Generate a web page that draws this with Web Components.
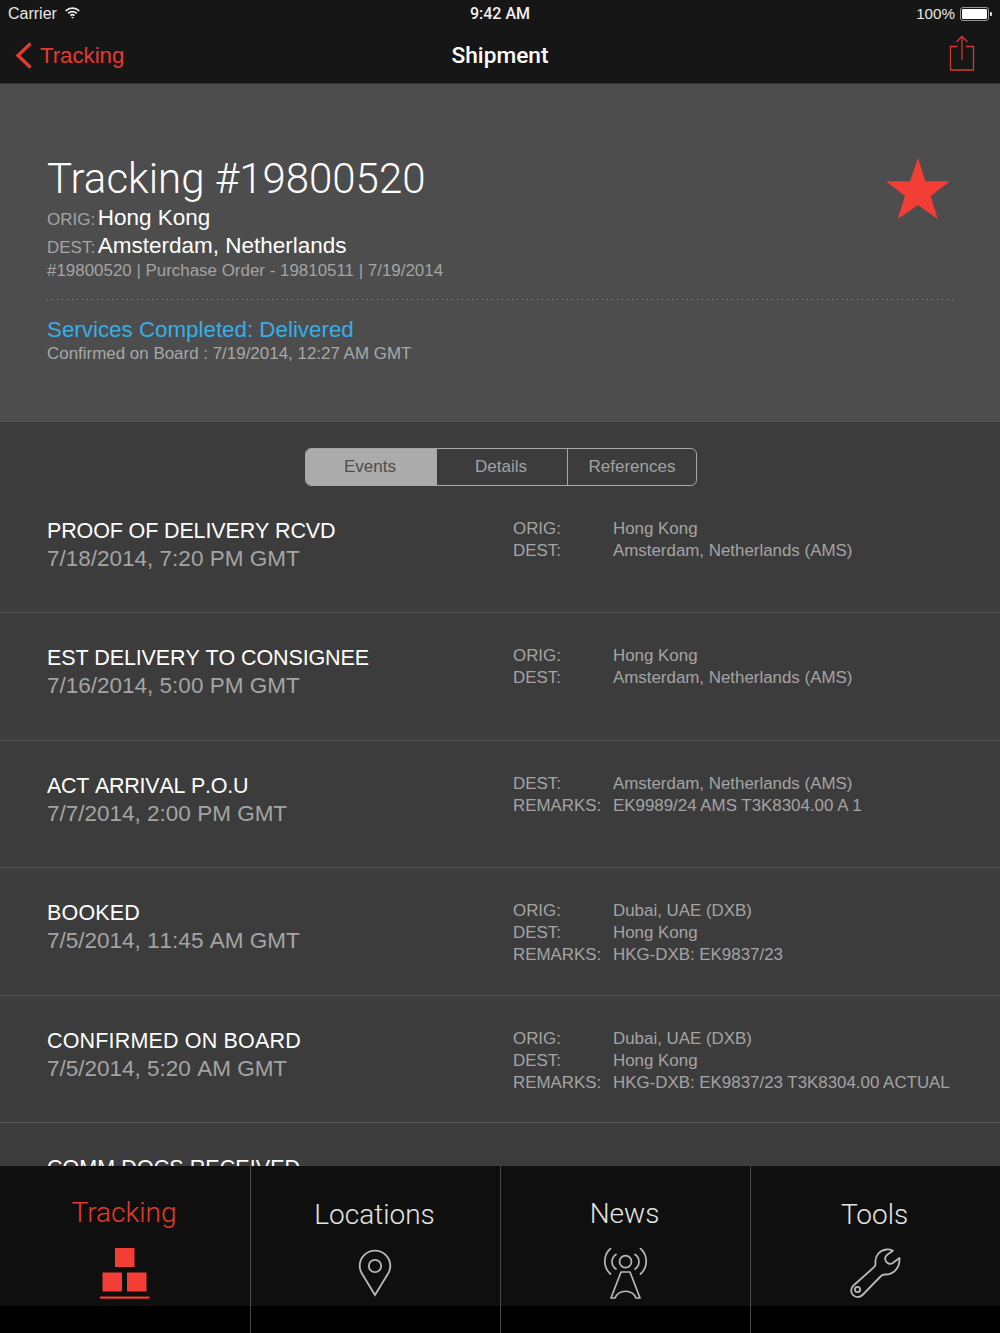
<!DOCTYPE html>
<html>
<head>
<meta charset="utf-8">
<title>Shipment</title>
<style>
  html, body { margin: 0; background: #000; }
  body { font-family: "Liberation Sans", Arial, sans-serif; }
</style>
</head>
<body>
<shipment-app>
  <status-bar></status-bar>
  <nav-bar back="Tracking" title="Shipment"></nav-bar>
  <shipment-header></shipment-header>
  <event-list>
    <seg-control></seg-control>
    <event-row title="PROOF OF DELIVERY RCVD" date="7/18/2014, 7:20 PM GMT" style="--track:-.14px">
      <info-line label="ORIG:">Hong Kong</info-line>
      <info-line label="DEST:">Amsterdam, Netherlands (AMS)</info-line>
    </event-row>
    <event-row title="EST DELIVERY TO CONSIGNEE" date="7/16/2014, 5:00 PM GMT" style="--track:-.12px">
      <info-line label="ORIG:">Hong Kong</info-line>
      <info-line label="DEST:">Amsterdam, Netherlands (AMS)</info-line>
    </event-row>
    <event-row title="ACT ARRIVAL P.O.U" date="7/7/2014, 2:00 PM GMT" style="--track:-.25px">
      <info-line label="DEST:">Amsterdam, Netherlands (AMS)</info-line>
      <info-line label="REMARKS:">EK9989/24 AMS T3K8304.00 A 1</info-line>
    </event-row>
    <event-row title="BOOKED" date="7/5/2014, 11:45 AM GMT" style="--track:.17px">
      <info-line label="ORIG:">Dubai, UAE (DXB)</info-line>
      <info-line label="DEST:">Hong Kong</info-line>
      <info-line label="REMARKS:">HKG-DXB: EK9837/23</info-line>
    </event-row>
    <event-row title="CONFIRMED ON BOARD" date="7/5/2014, 5:20 AM GMT" style="--track:.17px">
      <info-line label="ORIG:">Dubai, UAE (DXB)</info-line>
      <info-line label="DEST:">Hong Kong</info-line>
      <info-line label="REMARKS:">HKG-DXB: EK9837/23 T3K8304.00 ACTUAL</info-line>
    </event-row>
    <event-row title="COMM DOCS RECEIVED" date="" style="--track:.06px"></event-row>
  </event-list>
  <tab-bar>
    <tab-item label="Tracking" active style="--nudge:-1px">
      <svg width="50" height="52" viewBox="0 0 50 52"><g fill="#f23e35"><rect x="15" y="0" width="19.5" height="19"/><rect x="2.5" y="24.5" width="19.5" height="19"/><rect x="27" y="24.500" width="19.5" height="19"/><rect x="0" y="48.5" width="49.5" height="2.2"/></g></svg>
    </tab-item>
    <tab-item label="Locations" style="--nudge:1px">
      <svg width="50" height="52" viewBox="0 0 50 52" fill="none" stroke="#b9b9b9" stroke-width="1.8"><path d="M24 47 L11.500 26.500 C9.500 23.500 8.700 21 8.700 18 A15.300 15.300 0 0 1 39.300 18 C39.300 21 38.500 23.500 36.500 26.500 Z"/><circle cx="24" cy="18" r="6.200"/></svg>
    </tab-item>
    <tab-item label="News">
      <svg width="50" height="52" viewBox="0 0 50 52" fill="none" stroke="#b9b9b9" stroke-width="1.7" stroke-linecap="round" stroke-linejoin="round"><circle cx="24.500" cy="13.700" r="6"/><path d="M15 6.500A8.600 8.600 0 0 0 15 21"/><path d="M34 6.500A8.600 8.600 0 0 1 34 21"/><path d="M9.500 .5A17.100 17.100 0 0 0 9.500 26"/><path d="M39.500 .5A17.100 17.100 0 0 1 39.500 26"/><path d="M20 24 L10 50 H14 C18 41 31 41 35 50 H39 L29 24 Z"/></svg>
    </tab-item>
    <tab-item label="Tools" style="--nudge:.5px">
      <svg width="52" height="52" viewBox="0 0 52 52" fill="none" stroke="#b9b9b9" stroke-width="1.8" stroke-linejoin="round"><path d="M36.500 1.500 C29.500 2 24.500 8.500 25.500 15.500 C25.700 17 25.300 18 24 19.200 L3.500 37.500 C.5 40.300 .5 44.500 3 47 C5.500 49.700 9.800 49.700 12.500 47 L31 28 C32.300 26.800 33.500 26.500 35 26.500 C43.500 26.700 50 20 49.500 10 L42 15.500 C39.500 16.500 36.500 15 35.500 12.500 C34.700 10 35.500 8 37.500 6.500 L43 2.800 C41 1.800 38.800 1.300 36.500 1.500 Z"/><circle cx="7.500" cy="41.500" r="2.600"/></svg>
    </tab-item>
  </tab-bar>
</shipment-app>

<script>
// small helper, every element below is just a template + styles
function shadow(el, css, html) {
  el.attachShadow({ mode: "open" });
  el.shadowRoot.innerHTML = `<style>${css}</style>${html}`;
}

class ShipmentApp extends HTMLElement {
  constructor() {
    super();
    shadow(this, `
      :host {
        display: flex;
        flex-direction: column;
        height: 1333px;
        overflow: hidden;
        font-family: "Liberation Sans", Arial, sans-serif;
      }
    `, `<slot></slot>`);
  }
}

class StatusBar extends HTMLElement {
  constructor() {
    super();
    shadow(this, `
      :host {
        display: grid;
        grid-template-columns: 1fr auto 1fr;
        align-items: center;
        height: 28px;
        padding: 0 8px;
        background: #161616;
        color: #e8e8e8;
        font-size: 16px;
        flex: none;
      }
      .left { display: flex; align-items: center; gap: 8px; }
      .right { display: flex; align-items: center; justify-content: flex-end; gap: 5px; }
      .right span { font-size: 15.2px; margin-bottom: 2px; }
      .time { color: #f2f2f2; font-family: Roboto, sans-serif; font-weight: 500; margin-bottom: 1px; }
      svg { display: block; }
      .wifi { margin-top: -2px; }
    `, `
      <div class="left"><span>Carrier</span>
        <svg class="wifi" width="15" height="12" viewBox="0 0 15 12" fill="none" stroke="#eee" stroke-width="1.8"><path d="M.8 3.8a9.6 9.6 0 0 1 13.4 0"/><path d="M3.2 6.300a6.200 6.200 0 0 1 8.600 0"/><path d="M5.500 8.600a2.900 2.900 0 0 1 4 0"/><path d="M7.500 11.600l-1.500-1.700h3z" fill="#eee" stroke="none"/></svg>
      </div>
      <div class="time">9:42 AM</div>
      <div class="right"><span>100%</span>
        <svg width="32" height="14" viewBox="0 0 32 14"><rect x=".5" y=".5" width="28" height="13" rx="2.5" fill="none" stroke="#999"/><rect x="2" y="2" width="25" height="10" rx="1.200" fill="#fff"/><path d="M30 5h1a1 1 0 0 1 1 1v2a1 1 0 0 1-1 1h-1z" fill="#ddd"/></svg>
      </div>
    `);
  }
}

class NavBar extends HTMLElement {
  constructor() {
    super();
    shadow(this, `
      :host {
        display: grid;
        grid-template-columns: 1fr auto 1fr;
        align-items: center;
        height: 54px;
        padding: 0 25px 1px 15px;
        background: #161616;
        border-bottom: 1px solid #333;
        flex: none;
      }
      .back { display: flex; align-items: center; gap: 7px; color: #e8382f; font-size: 22.2px; }
      .back span { margin-top: 1px; }
      .title { color: #fff; font-family: Roboto, sans-serif; font-weight: 500; font-size: 22.7px; margin-left: 10px; }
      .share { justify-self: end; display: block; margin-bottom: 5px; }
      svg { display: block; }
    `, `
      <div class="back">
        <svg width="18" height="27" viewBox="0 0 18 27" fill="none" stroke="#e8382f" stroke-width="3.4"><path d="M15.500 1.500L3 13.500l12.500 12"/></svg>
        <span>${this.getAttribute("back")}</span>
      </div>
      <div class="title">${this.getAttribute("title")}</div>
      <svg class="share" width="26" height="36" viewBox="0 0 26 36" fill="none" stroke="#cf3a32" stroke-width="1.3"><path d="M8.500 11.500H1.500V35h23V11.500h-7.500"/><path d="M13 25V1.500"/><path d="M7.500 7L13 1.500 18.500 7"/></svg>
    `);
  }
}

class ShipmentHeader extends HTMLElement {
  constructor() {
    super();
    shadow(this, `
      :host {
        display: block;
        position: relative;
        height: 338px;
        box-sizing: border-box;
        padding: 71px 47px 0;
        background: #4d4d4d;
        flex: none;
      }
      h1 {
        margin: 0 0 1px;
        font: 300 42px/48px Roboto, sans-serif;
        color: #fff;
      }
      .line { display: flex; align-items: baseline; gap: 2.5px; height: 28px; line-height: 28px; font-size: 22.5px; color: #fff; }
      .line b { font-weight: normal; font-size: 17px; color: #a4a4a4; }
      .sub { font-size: 16.93px; line-height: 20px; color: #a4a4a4; margin-top: 1px; }
      .rule {
        height: 1px;
        margin: 18px 0 17px;
        background: linear-gradient(90deg, #8a8a8a 1px, transparent 1px) 0 0 / 5px 1px repeat-x;
      }
      .status { font-size: 22.35px; line-height: 26px; color: #37ade9; }
      .conf { font-size: 16.95px; line-height: 22px; color: #a8a8a8; }
      .star { position: absolute; left: 885px; top: 73px; }
    `, `
      <h1>Tracking #19800520</h1>
      <div class="line"><b>ORIG:</b><span>Hong Kong</span></div>
      <div class="line"><b>DEST:</b><span>Amsterdam, Netherlands</span></div>
      <div class="sub">#19800520 | Purchase Order - 19810511 | 7/19/2014</div>
      <div class="rule"></div>
      <div class="status">Services Completed: Delivered</div>
      <div class="conf">Confirmed on Board : 7/19/2014, 12:27 AM GMT</div>
      <svg class="star" width="66" height="64" viewBox="0 0 66 64"><path fill="#f23e35" d="M33 1L25 24.300H1L20 39 12.700 62 33 48 52.700 62 45.700 39 65 24.300H40.300z"/></svg>
    `);
  }
}

class EventList extends HTMLElement {
  constructor() {
    super();
    shadow(this, `
      :host {
        display: flex;
        flex-direction: column;
        flex: 1;
        min-height: 0;
        overflow: hidden;
        background: #3c3c3c;
      }
    `, `<slot></slot>`);
  }
}

class SegControl extends HTMLElement {
  constructor() {
    super();
    shadow(this, `
      :host {
        display: flex;
        justify-content: center;
        padding: 26px 0 0 2px;
        margin-bottom: -.5px;
        flex: none;
      }
      .seg {
        display: grid;
        grid-template-columns: 130px 131px 129px;
        width: 392px;
        height: 38px;
        box-sizing: border-box;
        border: 1px solid #a6a6a6;
        border-radius: 6px;
        overflow: hidden;
      }
      .seg div {
        display: flex;
        align-items: center;
        justify-content: center;
        font-size: 17px;
        color: #a2a2a2;
        border-left: 1px solid #a6a6a6;
      }
      .seg div:first-child { border-left: 0; background: #ababab; color: #4d4d4d; padding-right: 2px; }
      .seg div:nth-child(2) { padding-right: 2px; }
    `, `<div class="seg"><div>Events</div><div>Details</div><div>References</div></div>`);
  }
}

class EventRow extends HTMLElement {
  constructor() {
    super();
    shadow(this, `
      :host {
        display: grid;
        grid-template-columns: 466px 1fr;
        height: 127.5px;
        box-sizing: border-box;
        padding: 31px 0 0 47px;
        border-bottom: 1px solid #555;
        flex: none;
      }
      .t { font-size: 21.5px; line-height: 28px; color: #fff; font-kerning: none; letter-spacing: var(--track, 0); }
      .d { font-size: 22.5px; line-height: 27.6px; color: #a4a4a4; font-kerning: none; }
      .info { display: flex; flex-direction: column; margin-top: 1px; }
    `, `
      <div><div class="t">${this.getAttribute("title")}</div><div class="d">${this.getAttribute("date")}</div></div>
      <div class="info"><slot></slot></div>
    `);
  }
}

class InfoLine extends HTMLElement {
  constructor() {
    super();
    shadow(this, `
      :host {
        display: grid;
        grid-template-columns: 100px 1fr;
        font-size: 16.9px;
        line-height: 22px;
        color: #a4a4a4;
      }
    `, `<span>${this.getAttribute("label")}</span><span><slot></slot></span>`);
  }
}

class TabBar extends HTMLElement {
  constructor() {
    super();
    shadow(this, `
      :host {
        display: grid;
        grid-template-columns: repeat(4, 1fr);
        height: 167px;
        background: linear-gradient(#0f0f0f 140px, #000 140px);
        flex: none;
      }
    `, `<slot></slot>`);
  }
}

class TabItem extends HTMLElement {
  constructor() {
    super();
    const active = this.hasAttribute("active");
    shadow(this, `
      :host {
        display: flex;
        flex-direction: column;
        align-items: center;
        padding-top: 29px;
        box-sizing: border-box;
        color: ${active ? "#e8382f" : "#e4e4e4"};
        font: 300 28px/38px Roboto, sans-serif;
      }
      :host(:not(:first-child)) { border-left: 1px solid #4a4a4a; }
      .label { margin: var(--nudge, 0) 2px calc(0px - var(--nudge, 0px)) 0; }
      .icon { margin-top: 15px; display: block; }
    `, `<span class="label">${this.getAttribute("label")}</span><div class="icon"><slot></slot></div>`);
  }
}

customElements.define("shipment-app", ShipmentApp);
customElements.define("status-bar", StatusBar);
customElements.define("nav-bar", NavBar);
customElements.define("shipment-header", ShipmentHeader);
customElements.define("event-list", EventList);
customElements.define("seg-control", SegControl);
customElements.define("event-row", EventRow);
customElements.define("info-line", InfoLine);
customElements.define("tab-bar", TabBar);
customElements.define("tab-item", TabItem);
</script>
</body>
</html>
